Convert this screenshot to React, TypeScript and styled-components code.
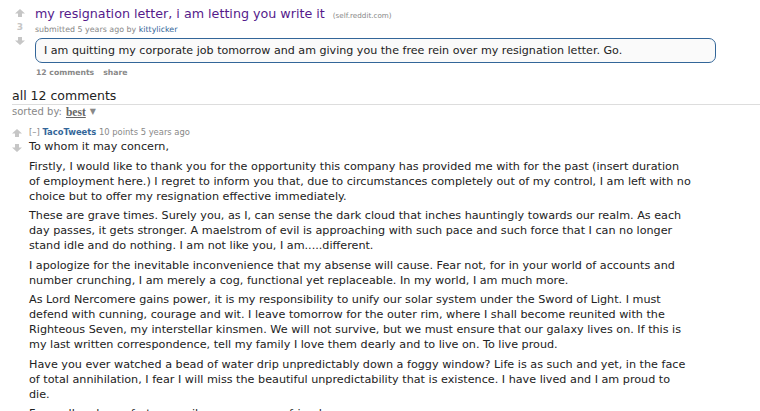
import React from "react";
import styled, { createGlobalStyle } from "styled-components";

const Global = createGlobalStyle`
  html, body { margin: 0; padding: 0; background: #fff; }
  body { font-family: "DejaVu Sans", Verdana, sans-serif; color: #222; }
  p { margin: 0; }
`;

const Page = styled.div`
  width: 760px;
  height: 411px;
  overflow: hidden;
  display: flex;
  flex-direction: column;
`;

const Post = styled.div`
  display: flex;
  padding: 6px 0 0 15px;
`;

const MidCol = styled.div<{ $w: number }>`
  width: ${(p) => p.$w}px;
  display: flex;
  flex-direction: column;
  align-items: center;
  flex-shrink: 0;
`;

const Score = styled.div`
  font-size: 9px;
  line-height: 10px;
  font-weight: bold;
  color: #c6c6c6;
  margin: 5px 0 5px;
`;

const ArrowBox = styled.svg<{ $mt?: number }>`
  display: block;
  margin-top: ${(p) => p.$mt ?? 0}px;
`;

const Entry = styled.div`
  display: flex;
  flex-direction: column;
  margin-left: 10px;
`;

const TitleRow = styled.div`
  display: flex;
  align-items: baseline;
  gap: 8px;
  line-height: 16px;
`;

const Title = styled.a`
  font-size: 12.7px;
  color: #551a8b;
  text-decoration: none;
`;

const Domain = styled.span`
  font-size: 7.2px;
  color: #888;
`;

const Tagline = styled.div<{ $mt?: number; $size: number }>`
  font-size: ${(p) => p.$size}px;
  line-height: 12px;
  color: #888;
  margin-top: ${(p) => p.$mt ?? 0}px;
`;

const Author = styled.a<{ $bold?: boolean }>`
  color: #369;
  text-decoration: none;
  font-weight: ${(p) => (p.$bold ? "bold" : "normal")};
`;

const SelfText = styled.div`
  margin-top: 2px;
  width: 681px;
  box-sizing: border-box;
  border: 1px solid #369;
  border-radius: 7px;
  background: #fafafa;
  padding: 4px 8px;
  font-size: 11.1px;
  line-height: 15px;
  color: #222;
`;

const Buttons = styled.div`
  display: flex;
  gap: 9px;
  margin-top: 5px;
  margin-left: 1px;
  font-size: 7.7px;
  line-height: 10px;
  font-weight: bold;
  color: #888;
`;

const CommentArea = styled.div`
  margin: 10px 0 0 12px;
  display: flex;
  flex-direction: column;
`;

const Header = styled.div`
  font-size: 12.5px;
  line-height: 16px;
  color: #222;
  border-bottom: 1px solid #ddd;
`;

const Sorted = styled.div`
  font-size: 10px;
  line-height: 12px;
  color: #888;
  margin-top: 1px;
  display: flex;
  align-items: center;
  gap: 4px;
`;

const Best = styled.span`
  font-family: "Liberation Serif", "Times New Roman", serif;
  font-weight: bold;
  font-size: 11.5px;
  text-decoration: underline;
  color: #666;
`;

const Caret = styled.span`
  font-size: 8px;
  color: #888;
`;

const Comment = styled.div`
  display: flex;
  margin-top: 8px;
`;

const CommentEntry = styled.div`
  display: flex;
  flex-direction: column;
  margin-left: 7px;
`;

const Expand = styled.span`
  color: #888;
`;

const Body = styled.div`
  display: flex;
  flex-direction: column;
  gap: 4.5px;
  font-size: 11.2px;
  line-height: 15px;
  color: #222;
  width: 663.5px;
  margin-top: 1px;
`;

const Arrow = ({ down, mt }: { down?: boolean; mt?: number }) => (
  <ArrowBox $mt={mt} width="10" height="8" viewBox="0 0 10 8">
    <path
      d="M5 0 L10 4.5 L7 4.5 L7 8 L3 8 L3 4.5 L0 4.5 Z"
      fill="#c6c6c6"
      transform={down ? "rotate(180 5 4)" : undefined}
    />
  </ArrowBox>
);

const paragraphs = [
  "Firstly, I would like to thank you for the opportunity this company has provided me with for the past (insert duration of employment here.) I regret to inform you that, due to circumstances completely out of my control, I am left with no choice but to offer my resignation effective immediately.",
  "These are grave times. Surely you, as I, can sense the dark cloud that inches hauntingly towards our realm. As each day passes, it gets stronger. A maelstrom of evil is approaching with such pace and such force that I can no longer stand idle and do nothing. I am not like you, I am.....different.",
  "I apologize for the inevitable inconvenience that my absense will cause. Fear not, for in your world of accounts and number crunching, I am merely a cog, functional yet replaceable. In my world, I am much more.",
  "As Lord Nercomere gains power, it is my responsibility to unify our solar system under the Sword of Light. I must defend with cunning, courage and wit. I leave tomorrow for the outer rim, where I shall become reunited with the Righteous Seven, my interstellar kinsmen. We will not survive, but we must ensure that our galaxy lives on. If this is my last written correspondence, tell my family I love them dearly and to live on. To live proud.",
  "Have you ever watched a bead of water drip unpredictably down a foggy window? Life is as such and yet, in the face of total annihilation, I fear I will miss the beautiful unpredictability that is existence. I have lived and I am proud to die.",
  "Farewell and may fortune smile upon you, my friends.",
];

export default function App() {
  return (
    <Page>
      <Global />
      <Post>
        <MidCol $w={10}>
          <Arrow mt={3} />
          <Score>3</Score>
          <Arrow down />
        </MidCol>
        <Entry>
          <TitleRow>
            <Title>my resignation letter, i am letting you write it</Title>
            <Domain>(self.reddit.com)</Domain>
          </TitleRow>
          <Tagline $size={7.9}>
            submitted 5 years ago by <Author>kittylicker</Author>
          </Tagline>
          <SelfText>
            I am quitting my corporate job tomorrow and am giving you the free
            rein over my resignation letter. Go.
          </SelfText>
          <Buttons>
            <span>12 comments</span>
            <span>share</span>
          </Buttons>
        </Entry>
      </Post>
      <CommentArea>
        <Header>all 12 comments</Header>
        <Sorted>
          sorted by: <Best>best</Best>
          <Caret>▼</Caret>
        </Sorted>
        <Comment>
          <MidCol $w={10}>
            <Arrow mt={3} />
            <Arrow down mt={7} />
          </MidCol>
          <CommentEntry>
            <Tagline $size={8.4}>
              <Expand>[–]</Expand> <Author $bold>TacoTweets</Author> 10 points 5
              years ago
            </Tagline>
            <Body>
              <p>To whom it may concern,</p>
              {paragraphs.map((t, i) => (
                <p key={i}>{t}</p>
              ))}
            </Body>
          </CommentEntry>
        </Comment>
      </CommentArea>
    </Page>
  );
}
